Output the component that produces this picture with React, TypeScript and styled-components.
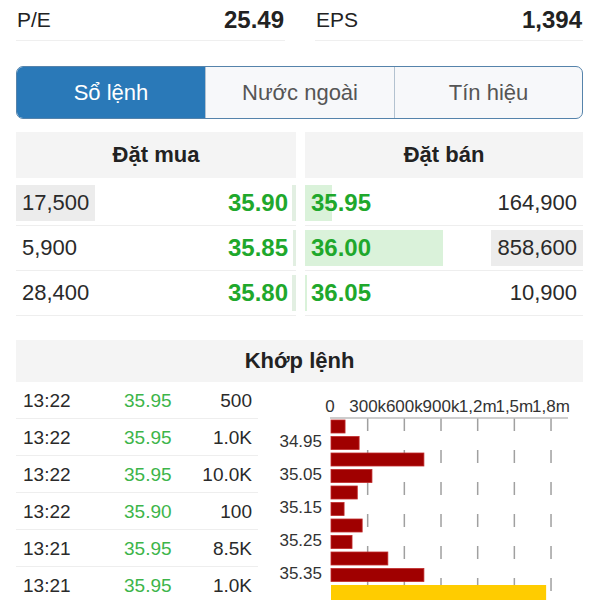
import React from 'react';
import styled, { createGlobalStyle } from 'styled-components';

const GlobalStyle = createGlobalStyle`
  html, body {
    margin: 0;
    padding: 0;
    background: #fff;
    overflow: hidden;
  }
  body {
    font-family: "Liberation Sans", Arial, sans-serif;
    color: #222;
  }
`;

const Page = styled.div`
  width: 600px;
  padding: 0 17px 0 16px;
  box-sizing: border-box;
`;

const StatsRow = styled.div`
  display: grid;
  grid-template-columns: 269px 268px;
  column-gap: 30px;
`;

const StatCell = styled.div`
  height: 40px;
  display: flex;
  align-items: center;
  justify-content: space-between;
  border-bottom: 1px solid #efefef;
  padding: 0 1px 0 1px;
`;

const StatLabel = styled.span`
  font-size: 21px;
  color: #222;
`;

const StatValue = styled.span`
  font-size: 24px;
  font-weight: 700;
  color: #222;
`;

const Tabs = styled.div`
  margin-top: 25px;
  height: 53px;
  box-sizing: border-box;
  display: grid;
  grid-template-columns: 188px 189px 1fr;
  border: 1.5px solid #5583ab;
  border-radius: 7px;
  overflow: hidden;
  background: #f7f8fa;
`;

const Tab = styled.div<{ $active?: boolean }>`
  display: flex;
  align-items: center;
  justify-content: center;
  font-size: 22px;
  color: ${({ $active }) => ($active ? '#fff' : '#555')};
  background: ${({ $active }) => ($active ? '#2a79b8' : 'transparent')};
  & + & {
    border-left: 1px solid #b3c2d0;
  }
`;

const Book = styled.div`
  margin-top: 13px;
  display: grid;
  grid-template-columns: 280px 278px;
  column-gap: 9px;
`;

const SectionHeader = styled.div<{ $height: number }>`
  height: ${({ $height }) => $height}px;
  display: flex;
  align-items: center;
  justify-content: center;
  background: #f4f4f4;
  font-size: 22px;
  font-weight: 700;
  color: #222;
`;

const BookRows = styled.div`
  margin-top: 3px;
`;

const BookRow = styled.div`
  height: 45px;
  box-sizing: border-box;
  border-bottom: 1px solid #eeeeee;
  display: flex;
  align-items: center;
`;

const BookBar = styled.div<{ $side: 'buy' | 'sell'; $depth: number; $tint: string }>`
  flex: 1;
  height: 36px;
  display: flex;
  align-items: center;
  justify-content: space-between;
  flex-direction: ${({ $side }) => ($side === 'buy' ? 'row' : 'row-reverse')};
  background: ${({ $side, $depth, $tint }) =>
    `linear-gradient(to ${$side === 'buy' ? 'left' : 'right'}, ${$tint} ${$depth}px, transparent ${$depth}px)`};
`;

const Volume = styled.span<{ $flash?: boolean }>`
  height: 36px;
  line-height: 36px;
  padding: 0 6px;
  font-size: 22px;
  color: #2a2a2a;
  background: ${({ $flash }) => ($flash ? '#ececec' : 'transparent')};
`;

const Price = styled.span<{ $side: 'buy' | 'sell' }>`
  font-size: 24px;
  font-weight: 700;
  color: #1fa82c;
  padding: ${({ $side }) => ($side === 'buy' ? '0 8px 0 0' : '0 0 0 6px')};
`;

const Matched = styled.div`
  margin-top: 24px;
`;

const MatchedBody = styled.div`
  display: grid;
  grid-template-columns: 242px 1fr;
  column-gap: 12px;
`;

const TradeRow = styled.div`
  height: 37px;
  box-sizing: border-box;
  border-bottom: 1px solid #eeeeee;
  display: grid;
  grid-template-columns: 101px 1fr auto;
  align-items: center;
  padding: 2px 6px 0 7px;
  font-size: 19px;
  color: #2a2a2a;
`;

const TradePrice = styled.span`
  color: #3db54a;
`;

const ChartBox = styled.div`
  height: 218px;
`;

const buyRows = [
  { volume: '17,500', price: '35.90', depth: 4, flash: true },
  { volume: '5,900', price: '35.85', depth: 3, flash: false },
  { volume: '28,400', price: '35.80', depth: 4, flash: false },
];

const sellRows = [
  { volume: '164,900', price: '35.95', depth: 27, flash: false },
  { volume: '858,600', price: '36.00', depth: 138, flash: true },
  { volume: '10,900', price: '36.05', depth: 2, flash: false },
];

const trades = [
  ['13:22', '35.95', '500'],
  ['13:22', '35.95', '1.0K'],
  ['13:22', '35.95', '10.0K'],
  ['13:22', '35.90', '100'],
  ['13:21', '35.95', '8.5K'],
  ['13:21', '35.95', '1.0K'],
];

// volume at each price step, 34.90 -> 35.40
const volumes = [115, 230, 760, 335, 215, 107, 255, 172, 465, 760, 1760];
const ticks = ['0', '300k', '600k', '900k', '1,2m', '1,5m', '1,8m'];
const priceLabels = ['34.95', '35.05', '35.15', '35.25', '35.35'];

const X0 = 61;
const PX_PER_K = 36.67 / 300;
const BAR_TOP = 38;
const BAR_PITCH = 16.5;

const VolumeChart: React.FC = () => (
  <svg width="313" height="218" viewBox="0 0 313 218">
    {ticks.map((t, i) => {
      const x = X0 + i * 36.67;
      return (
        <g key={t}>
          {i > 0 && (
            <line x1={x} y1={36} x2={x} y2={218} stroke="#a0a0a0" strokeWidth="1.5" strokeDasharray="13 19" />
          )}
          <text x={i === 0 ? 60 : x} y={30} fontSize="17" fill="#333" textAnchor="middle" fontFamily="Liberation Sans, Arial, sans-serif">
            {t}
          </text>
        </g>
      );
    })}
    <line x1={60} y1={36} x2={298} y2={36} stroke="#bdbdbd" strokeWidth="1.5" />
    {volumes.map((v, i) => {
      const last = i === volumes.length - 1;
      return (
        <rect
          key={i}
          x={X0}
          y={BAR_TOP + i * BAR_PITCH}
          width={v * PX_PER_K}
          height={last ? 16 : 13}
          fill={last ? '#ffcc00' : '#a00000'}
          stroke={last ? 'none' : '#c02a2a'}
          strokeWidth="0.8"
        />
      );
    })}
    {priceLabels.map((p, i) => (
      <text
        key={p}
        x={52}
        y={BAR_TOP + (1 + i * 2) * BAR_PITCH + 6.5}
        fontSize="17"
        fill="#333"
        textAnchor="end"
        dominantBaseline="middle"
        fontFamily="Liberation Sans, Arial, sans-serif"
      >
        {p}
      </text>
    ))}
  </svg>
);

const App: React.FC = () => (
  <Page>
    <GlobalStyle />
    <StatsRow>
      <StatCell>
        <StatLabel>P/E</StatLabel>
        <StatValue>25.49</StatValue>
      </StatCell>
      <StatCell>
        <StatLabel>EPS</StatLabel>
        <StatValue>1,394</StatValue>
      </StatCell>
    </StatsRow>

    <Tabs>
      <Tab $active>Sổ lệnh</Tab>
      <Tab>Nước ngoài</Tab>
      <Tab>Tín hiệu</Tab>
    </Tabs>

    <Book>
      <div>
        <SectionHeader $height={46}>Đặt mua</SectionHeader>
        <BookRows>
          {buyRows.map((r) => (
            <BookRow key={r.price}>
              <BookBar $side="buy" $depth={r.depth} $tint="#e2efe2">
                <Volume $flash={r.flash}>{r.volume}</Volume>
                <Price $side="buy">{r.price}</Price>
              </BookBar>
            </BookRow>
          ))}
        </BookRows>
      </div>
      <div>
        <SectionHeader $height={46}>Đặt bán</SectionHeader>
        <BookRows>
          {sellRows.map((r) => (
            <BookRow key={r.price}>
              <BookBar $side="sell" $depth={r.depth} $tint="#daf2da">
                <Volume $flash={r.flash}>{r.volume}</Volume>
                <Price $side="sell">{r.price}</Price>
              </BookBar>
            </BookRow>
          ))}
        </BookRows>
      </div>
    </Book>

    <Matched>
      <SectionHeader $height={42}>Khớp lệnh</SectionHeader>
      <MatchedBody>
        <div>
          {trades.map(([time, price, vol], i) => (
            <TradeRow key={i}>
              <span>{time}</span>
              <TradePrice>{price}</TradePrice>
              <span>{vol}</span>
            </TradeRow>
          ))}
        </div>
        <ChartBox>
          <VolumeChart />
        </ChartBox>
      </MatchedBody>
    </Matched>
  </Page>
);

export default App;
